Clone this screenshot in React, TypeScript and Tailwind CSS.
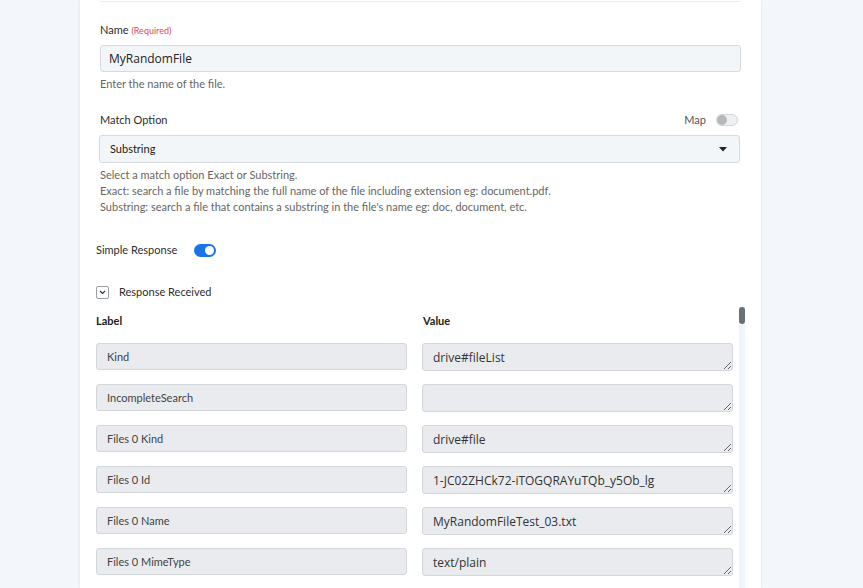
import React from 'react';

const rows = [
  { label: 'Kind', value: 'drive#fileList' },
  { label: 'IncompleteSearch', value: '' },
  { label: 'Files 0 Kind', value: 'drive#file' },
  { label: 'Files 0 Id', value: '1-JC02ZHCk72-iTOGQRAYuTQb_y5Ob_lg' },
  { label: 'Files 0 Name', value: 'MyRandomFileTest_03.txt' },
  { label: 'Files 0 MimeType', value: 'text/plain' },
];

const ui = { fontFamily: 'Lato, "Open Sans", sans-serif' };
const val = { fontFamily: '"Open Sans", "Noto Sans", sans-serif' };

const App = () => {
  return (
    <div className="h-[588px] w-full overflow-hidden bg-[#f3f6fa]" style={ui}>
      <div className="ml-[80px] w-[681px] h-full bg-white shadow-[0_0_3px_rgba(0,0,0,0.1)]">
        <div className="mx-[20px] pt-px">
          <div className="h-px bg-[#eceff3]" />

          {/* Name */}
          <div className="mt-[20px] text-[11px] leading-[16px] text-[#2d2d2d]">
            Name <span className="text-[9px] text-[#e8455a]">(Required)</span>
          </div>
          <div className="mt-[6px] h-[27px] flex items-center px-[8px] bg-[#f3f6f9] border border-[#d6dadf] rounded-[3px] text-[12px] text-[#222]" style={val}>
            MyRandomFile
          </div>
          <div className="mt-[4px] text-[11px] leading-[16px] text-[#666]">Enter the name of the file.</div>

          {/* Match option */}
          <div className="mt-[20px] flex items-center justify-between text-[11px] leading-[16px] text-[#2d2d2d]">
            <span>Match Option</span>
            <span className="mr-[3px] flex items-center gap-[10px] text-[#555]">
              Map
              <span className="w-[22px] h-[12px] rounded-full border border-[#d3d6da] bg-[#eef0f2] flex items-center">
                <span className="w-[10px] h-[10px] rounded-full bg-[#b5b9be]" />
              </span>
            </span>
          </div>
          <div className="mt-[7px] -ml-px mr-px h-[28px] flex items-center justify-between pl-[10px] pr-[12px] bg-[#f3f6f9] border border-[#d6dadf] rounded-[3px] text-[11px] text-[#222]">
            <span>Substring</span>
            <svg width="8" height="5" viewBox="0 0 8 5"><path d="M0 0h8L4 4.5z" fill="#222" /></svg>
          </div>
          <div className="mt-[4px] text-[11px] leading-[16px] text-[#666]">
            <div>Select a match option Exact or Substring.</div>
            <div>Exact: search a file by matching the full name of the file including extension eg: document.pdf.</div>
            <div>Substring: search a file that contains a substring in the file's name eg: doc, document, etc.</div>
          </div>
        </div>

        <div className="ml-[16px] mr-[16px]">
          {/* Simple response */}
          <div className="mt-[27px] flex items-center gap-[17px] text-[11px] leading-[16px] text-[#2d2d2d]">
            <span>Simple Response</span>
            <span className="w-[22px] h-[13px] rounded-full bg-[#1a73e8] flex items-center justify-end pr-[2px]">
              <span className="w-[9px] h-[9px] rounded-full bg-white" />
            </span>
          </div>

          {/* Response received */}
          <div className="mt-[26px] flex items-center gap-[10px] text-[11px] leading-[16px] text-[#2d2d2d]">
            <span className="w-[13px] h-[13px] border border-[#9aa0a6] rounded-[2px] flex items-center justify-center">
              <svg width="7" height="5" viewBox="0 0 7 5"><path d="M1 1l2.5 2.5L6 1" fill="none" stroke="#333" strokeWidth="1.2" /></svg>
            </span>
            <span>Response Received</span>
          </div>

          {/* Scroll area */}
          <div className="mt-[7px] flex gap-[6px]">
            <div className="w-[637px] pt-[6px]">
              <div className="grid grid-cols-2 gap-x-[15px] text-[11px] leading-[16px] font-bold text-[#222]">
                <span>Label</span>
                <span className="pl-px">Value</span>
              </div>
              <div className="mt-[14px] flex flex-col gap-[13px]">
                {rows.map((r) => (
                  <div key={r.label} className="grid grid-cols-2 gap-x-[15px]">
                    <div className="h-[27px] flex items-center pt-[2px] px-[10px] bg-[#e9ebee] border border-[#d3d6da] rounded-[3px] text-[11px] text-[#444]">
                      {r.label}
                    </div>
                    <textarea
                      readOnly
                      value={r.value}
                      className="h-[28px] px-[10px] pt-[6px] pb-[4px] leading-[16px] bg-[#e9ebee] border border-[#d3d6da] rounded-[3px] text-[12px] text-[#333] resize-y overflow-hidden outline-none"
                      style={val}
                    />
                  </div>
                ))}
              </div>
            </div>
            <div className="w-[6px] h-[300px] bg-[#eef5fd]">
              <div className="h-[17px] rounded-full bg-[#6b7076]" />
            </div>
          </div>
        </div>
      </div>
    </div>
  );
};

export default App;
